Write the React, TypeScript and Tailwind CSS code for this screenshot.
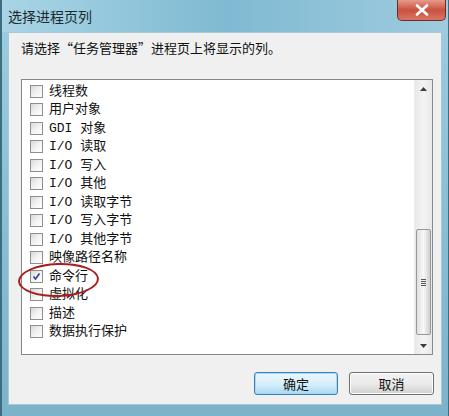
import React from 'react';

const items: { label: string; checked?: boolean }[] = [
  { label: '线程数' },
  { label: '用户对象' },
  { label: 'GDI 对象' },
  { label: 'I/O 读取' },
  { label: 'I/O 写入' },
  { label: 'I/O 其他' },
  { label: 'I/O 读取字节' },
  { label: 'I/O 写入字节' },
  { label: 'I/O 其他字节' },
  { label: '映像路径名称' },
  { label: '命令行', checked: true },
  { label: '虚拟化' },
  { label: '描述' },
  { label: '数据执行保护' },
];

const CheckBox = ({ checked }: { checked?: boolean }) => (
  <span className="w-[13px] h-[13px] border border-[#8f8f8f] bg-gradient-to-br from-[#d8d8d8] via-[#f2f2f2] to-[#ffffff] flex items-center justify-center shrink-0">
    {checked && (
      <svg width="9" height="9" viewBox="0 0 9 9">
        <path d="M1.5 4.5 L3.5 7 L7.5 1.5" fill="none" stroke="#2c3f8c" strokeWidth="1.6" />
      </svg>
    )}
  </span>
);

const App = () => {
  return (
    <div className="w-[449px] h-[416px] flex flex-col bg-gradient-to-b from-[#9fcde0] via-[#88c0d6] to-[#7bb3cb] border-l-2 border-r border-[#3d6e80] overflow-hidden">
      {/* Title bar */}
      <div className="h-[32px] flex items-start justify-between bg-gradient-to-r from-[#a9d5e6] via-[#7fbad2] to-[#9fcbde]">
        <span className="pl-[6px] pt-[7px] text-[14px] leading-[18px] text-[#1c2a30] [font-family:'Noto_Sans_CJK_SC',sans-serif]">
          选择进程页列
        </span>
        <div className="mr-[2px] w-[49px] h-[21px] rounded-b-[5px] border border-t-0 border-[#6d2c24] bg-gradient-to-b from-[#e79a8c] via-[#c9503f] to-[#d97566] flex items-center justify-center">
          <svg width="14" height="12" viewBox="0 0 14 12">
            <path d="M2 1.5 L12 10.5 M12 1.5 L2 10.5" stroke="#ffffff" strokeWidth="2.6" strokeLinecap="round" />
          </svg>
        </div>
      </div>

      {/* Body */}
      <div className="flex-1 mx-[6px] mb-[11px] bg-[#f0f0f0] border border-[#a8c8d4] flex flex-col [font-family:'Noto_Sans_CJK_SC',sans-serif]">
        <p className="pl-[12px] pt-[6px] text-[13px] leading-[18px] text-[#111]">
          请选择“任务管理器”进程页上将显示的列。
        </p>

        <div className="relative mt-[22px] ml-[12px] mr-[8px] h-[276px] bg-white border border-[#828790] flex">
          <div className="flex-1 flex flex-col pt-[2px] [font-family:'Liberation_Mono','Noto_Sans_CJK_SC',monospace]">
            {items.map((it) => (
              <div key={it.label} className="h-[18.5px] flex items-center pl-[8px] gap-[6px] text-[13px] text-[#111]">
                <CheckBox checked={it.checked} />
                <span className="leading-none whitespace-pre">{it.label}</span>
              </div>
            ))}
          </div>

          {/* Scrollbar */}
          <div className="w-[18px] flex flex-col bg-gradient-to-r from-[#e8e8e8] via-[#f4f4f4] to-[#e8e8e8] border-l border-[#ececec]">
            <div className="h-[17px] flex items-center justify-center">
              <svg width="7" height="4" viewBox="0 0 7 4"><path d="M0 4 L3.5 0 L7 4 Z" fill="#3c3c3c" /></svg>
            </div>
            <div className="flex-1 flex flex-col justify-end pb-[2px]">
              <div className="h-[106px] mx-[1px] rounded-[2px] border border-[#989898] bg-gradient-to-r from-[#e0e0e0] via-[#f8f8f8] to-[#cfcfcf] flex flex-col items-center justify-center gap-[1px]">
                <span className="w-[5px] h-px bg-[#555]" />
                <span className="w-[5px] h-px bg-[#555]" />
                <span className="w-[5px] h-px bg-[#555]" />
                <span className="w-[5px] h-px bg-[#555]" />
              </div>
            </div>
            <div className="h-[17px] flex items-center justify-center">
              <svg width="7" height="4" viewBox="0 0 7 4"><path d="M0 0 L7 0 L3.5 4 Z" fill="#3c3c3c" /></svg>
            </div>
          </div>

          {/* Red annotation ellipse */}
          <div className="absolute left-[-4px] top-[183px] w-[81px] h-[34px] rounded-[50%] border-2 border-[#a81e1e] -rotate-2 pointer-events-none" />
        </div>

        <div className="mt-[17px] mr-[7px] flex justify-end gap-[11px]">
          <button className="w-[84px] h-[23px] rounded-[3px] border border-[#3c7fb1] bg-gradient-to-b from-[#eaf6fd] via-[#d9f0fc] to-[#a7d9f5] shadow-[inset_0_0_0_1px_#a6d8f3] text-[13px] leading-none text-[#111]">
            确定
          </button>
          <button className="w-[85px] h-[23px] rounded-[3px] border border-[#707070] bg-gradient-to-b from-[#f2f2f2] via-[#ebebeb] to-[#d0d0d0] shadow-[inset_0_0_0_1px_#fcfcfc] text-[13px] leading-none text-[#111]">
            取消
          </button>
        </div>
      </div>
    </div>
  );
};

export default App;
